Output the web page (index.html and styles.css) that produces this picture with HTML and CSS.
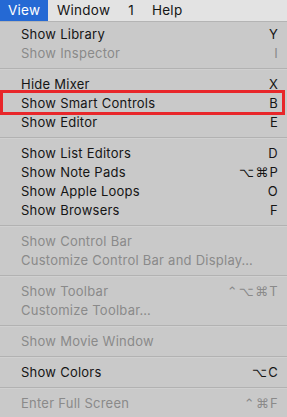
FILE: index.html
```html
<!DOCTYPE html>
<html lang="en">

<head>
    <meta charset="UTF-8">
    <meta name="viewport" content="width=device-width, initial-scale=1.0">
    <title>View menu</title>
    <link rel="stylesheet" href="styles.css">
</head>

<body>
    <div class="menubar">
        <span class="title active">View</span>
        <span class="title">Window</span>
        <span class="title">1</span>
        <span class="title">Help</span>
    </div>

    <ul class="menu">
        <li class="item"><span>Show Library</span><span class="key">Y</span></li>
        <li class="item off"><span>Show Inspector</span><span class="key">I</span></li>
        <li class="sep"></li>
        <li class="item"><span>Hide Mixer</span><span class="key">X</span></li>
        <li class="item marked"><span>Show Smart Controls</span><span class="key">B</span></li>
        <li class="item"><span>Show Editor</span><span class="key">E</span></li>
        <li class="sep"></li>
        <li class="item"><span>Show List Editors</span><span class="key">D</span></li>
        <li class="item"><span>Show Note Pads</span><span class="key"><i>⌥</i><i>⌘</i>P</span></li>
        <li class="item"><span>Show Apple Loops</span><span class="key">O</span></li>
        <li class="item"><span>Show Browsers</span><span class="key">F</span></li>
        <li class="sep"></li>
        <li class="item off"><span>Show Control Bar</span></li>
        <li class="item off"><span>Customize Control Bar and Display…</span></li>
        <li class="sep"></li>
        <li class="item off"><span>Show Toolbar</span><span class="key"><i>⌃</i><i>⌥</i><i>⌘</i>T</span></li>
        <li class="item off"><span>Customize Toolbar…</span></li>
        <li class="sep"></li>
        <li class="item off"><span>Show Movie Window</span></li>
        <li class="sep"></li>
        <li class="item"><span>Show Colors</span><span class="key"><i>⌥</i>C</span></li>
        <li class="sep"></li>
        <li class="item off"><span>Enter Full Screen</span><span class="key"><i>⌃</i><i>⌘</i>F</span></li>
    </ul>
</body>

</html>
```

FILE: styles.css
```css
html {
    font-family: Inter, 'Helvetica Neue', Arial, sans-serif;
    font-size: 13px;
    letter-spacing: 0.25px;
}

body {
    margin: 0;
    background: #c9c9c9;
    color: #151515;
}

.menubar {
    display: flex;
    height: 21px;
    background: #e3e3e3;
    border-bottom: 1px solid #b4b4b4;
    line-height: 21px;
    font-size: 13.5px;
}

.menubar .title {
    padding: 0 9px;
}

.menubar .title.active {
    width: 31px;
    padding: 0 9px 0 8px;
    background: #2569d4;
    color: #ffffff;
}

.menu {
    list-style: none;
    margin: 0;
    padding: 3px 0 0 0;
}

.item {
    display: flex;
    justify-content: space-between;
    height: 19px;
    line-height: 19px;
    padding: 0 9px 0 21px;
    position: relative;
}

.item.off {
    color: #8a8a8a;
}

.key i {
    font-style: normal;
    font-family: 'DejaVu Sans', sans-serif;
    font-size: 13px;
    margin-right: 1px;
}

.sep {
    box-sizing: border-box;
    height: 12px;
    padding-top: 5px;
}

.sep::after {
    content: "";
    display: block;
    height: 1px;
    background: #b2b2b2;
    border-bottom: 1px solid #d0d0d0;
}

.marked::after {
    content: "";
    position: absolute;
    left: 0;
    right: 2px;
    top: -4px;
    bottom: -2px;
    border: 3px solid #e8262a;
}
```
